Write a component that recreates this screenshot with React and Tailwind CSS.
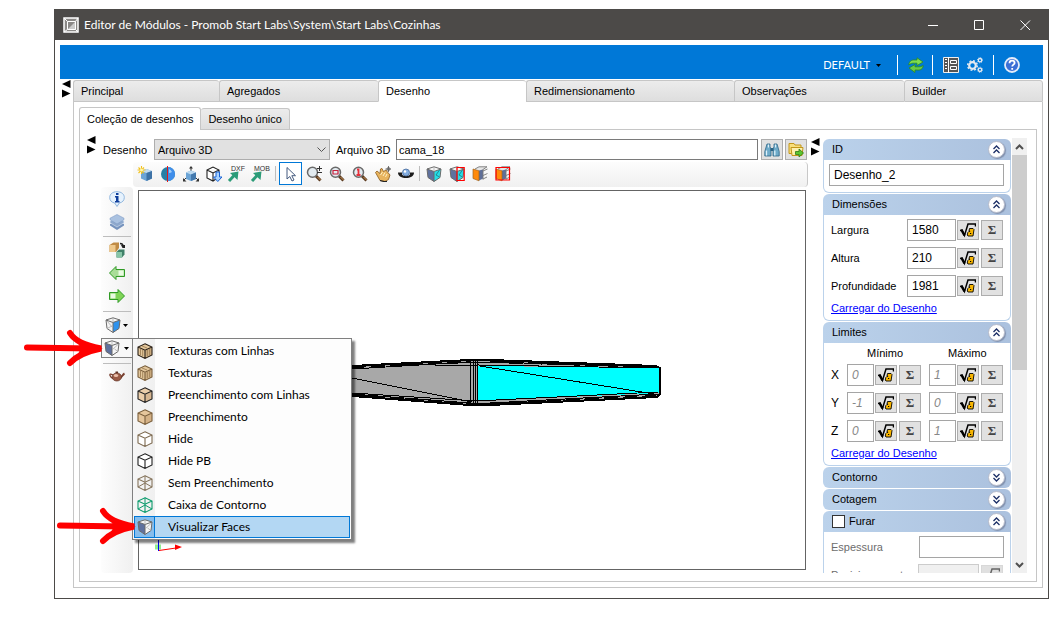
import { useState } from 'react';

const TABS = ['Principal', 'Agregados', 'Desenho', 'Redimensionamento', 'Observações', 'Builder'];

const MENU = [
  { label: 'Texturas com Linhas', icon: { fill: '#e3c79c', line: '#2b2118', grain: true } },
  { label: 'Texturas', icon: { fill: '#e3c79c', line: '#7a5f3c', grain: true } },
  { label: 'Preenchimento com Linhas', icon: { fill: '#ecceaa', line: '#222222' } },
  { label: 'Preenchimento', icon: { fill: '#e6c69c', line: '#7a5f3c' } },
  { label: 'Hide', icon: { fill: '#ffffff', line: '#7d6a50' } },
  { label: 'Hide PB', icon: { fill: '#ffffff', line: '#222222' } },
  { label: 'Sem Preenchimento', icon: { fill: 'none', line: '#85745c', hidden: true } },
  { label: 'Caixa de Contorno', icon: { fill: 'none', line: '#0b9b6c', hidden: true } },
  { label: 'Visualizar Faces', faces: true },
];

const inputBase = 'border border-[#a5a5a5] bg-white outline-none';

function Icon({ children }) {
  return (
    <svg width="16" height="16" viewBox="0 0 16 16" fill="none" className="shrink-0" aria-hidden="true">
      {children}
    </svg>
  );
}

function CubeIcon({ fill, line, grain, hidden }) {
  return (
    <Icon>
      <path d="M8 .8 15 4v8l-7 3.400L1 12V4Z" fill={fill} />
      {fill !== 'none' && fill !== '#ffffff' && <path d="M8 7.200 15 4v8l-7 3.400Z" fill="#8a6130" fillOpacity=".2" />}
      {grain && <path d="M3.500 6v6M5.700 7v6M10.300 7v6M12.700 6v6M5 3l5 2" stroke="#8a6a40" strokeWidth=".7" />}
      <path d="M8 .8 15 4v8l-7 3.400L1 12V4ZM1 4l7 3.200L15 4M8 7.200v8.200" stroke={line} strokeWidth="1.100" />
      {hidden && <path d="M8 .8v6.400M1 12l7-4 7 4" stroke={line} strokeWidth="1" />}
    </Icon>
  );
}

function FacesIcon({ left = '#5f719e', right, mark }) {
  return (
    <Icon>
      <path d="M1 3 8 .8 15 3l-1 8.500-6 4-6-4Z" fill="#f6f6f6" />
      <path d="M1 3 8 5.500v10l-6-4Z" fill={left} />
      {right && <path d="M8 5.500 15 3l-1 8.500-6 4Z" fill={right} />}
      <path d="M1 3 8 .8 15 3l-1 8.500-6 4-6-4ZM1 3l7 2.500L15 3M8 5.500v10" stroke="#6b6b6b" />
      <path d="M8 .8v4.700" stroke="#aaa" strokeWidth=".7" />
      {right === '#23dfe8' && <path d="m13.500 4-3.500 5 3.500 2" stroke="#24717f" strokeWidth=".8" />}
      {!right && <path d="m8 10 6-5.500M10.500 9l3.500 2.500" stroke="#aaa" strokeWidth=".8" />}
      {left === '#f4f4f4' && <path d="m2 11.500 6-3M2 4l6 7" stroke="#aaa" strokeWidth=".8" />}
      {mark && <path d="M8 1.500h7.200v13H8Z" stroke="#f00" strokeWidth="1.200" />}
    </Icon>
  );
}

function OrangeFacesIcon({ mark }) {
  return (
    <Icon>
      <path d="M3 3 7 .8h8L11 3.500v10l-4 1V4.500Z" fill="#e6e6e6" />
      <path d="M7 4.500 11 3.500v9L7 14.500Z" fill="#5f6f98" />
      <path d="M3 3 7 .8h8L11 3.500v10M11 5l4.500-2M11 9.500l4.500-2M11 13l4-2" stroke="#777" strokeWidth=".9" />
      <path d="M1 3 7 4.800v10L1 12.500Z" fill="#ff8a0a" stroke="#9c6424" strokeWidth=".7" />
      {mark && <path d="M1 1.500h13.500v12.500H1Z" stroke="#f00" strokeWidth="1.200" />}
    </Icon>
  );
}

function ZoomIcon({ children }) {
  return (
    <Icon>
      <path d="m10 10 4.500 4.500" stroke="#5b3a1e" strokeWidth="3" />
      <path d="m11.500 11 3 3" stroke="#c8955c" strokeWidth="1" />
      <circle cx="6.500" cy="6.200" r="5" fill="#e3ebf0" stroke="#6a6a6a" strokeWidth="1.500" />
      {children}
    </Icon>
  );
}

function ExportIcon({ text }) {
  return (
    <svg width="21" height="18" viewBox="0 0 21 18" fill="none" className="shrink-0 overflow-visible" aria-hidden="true">
      <path d="m3 16 6-6.500" stroke="#2c9c78" strokeWidth="3" />
      <path d="m4 8 8.500-1.500L11.500 15Z" fill="#2c9c78" />
      <text x="5" y="6" fontSize="7" fill="#333" fontFamily="Liberation Sans, sans-serif">{text}</text>
    </svg>
  );
}

function NewIcon() {
  return (
    <Icon>
      <path d="m4 5 5.500-2L15 5v7.500L9.500 15 4 12.500Z" fill="#6ba4d6" />
      <path d="m4 5 5.500-2L15 5 9.500 7Z" fill="#c3dcf0" />
      <path d="M9.500 7 15 5v7.500L9.500 15Z" fill="#3d72a6" />
      <path d="M4.500 0v8M.5 4h8M1.500 1.500l5.500 5.500M7 1.500 1.500 7" stroke="#f2c21c" strokeWidth="1.100" />
      <circle cx="4.500" cy="4" r="1.500" fill="#fff7b0" />
    </Icon>
  );
}

function MirrorIcon() {
  return (
    <Icon>
      <circle cx="8" cy="8" r="7" fill="#277fa6" />
      <path d="M8 1a7 7 0 0 1 0 14Z" fill="#3f8eea" />
      <path d="M9 3a5 5 0 0 1 3 3 6 6 0 0 1-3 1Z" fill="#9dccfa" />
      <path d="M7.500 0v16" stroke="#e01818" />
    </Icon>
  );
}

function AxesIcon() {
  return (
    <Icon>
      <path d="M8 6V1M3 12l-2.500 2.500M13 12l2.500 2.500" stroke="#333" />
      <path d="m8 0 2 2.500H6ZM0 12v3.500h3.500ZM16 12v3.500h-3.500Z" fill="#333" />
      <path d="m3 6.500 5-2 5 2v6.500L8 15l-5-2Z" fill="#6ba4d6" />
      <path d="m3 6.500 5-2 5 2-5 2Z" fill="#bcd9ef" />
      <path d="m8 8.500 5-2v6.500L8 15Z" fill="#4379ad" />
    </Icon>
  );
}

function ImportCubeIcon() {
  return (
    <Icon>
      <path d="m1 4 6-3 6 3v7l-6 4-6-3Zm0 0 6 3 6-3M7 7v8" fill="#fff" stroke="#222" strokeWidth="1.100" />
      <path d="M10 6h3.500v5H16l-4.200 4.500L7.500 11H10Z" fill="#a9d3ff" stroke="#1863d6" />
    </Icon>
  );
}

function HandIcon() {
  return (
    <Icon>
      <path d="M.5 6.500 2 5l3 2.500L5.500 3l1.500-.5 1.500 3L11 4l1.500 2L15 9l-1.500 4.500-3.500 2-5-1Z" fill="#e8b45e" stroke="#8a5a1c" strokeWidth=".8" />
      <path d="m5.500 9 2-3M8 10l2-3.500M10.500 11l1.500-3" stroke="#fff0c4" />
      <path d="M13.500 0v6M10.500 3h5.500" stroke="#555" strokeWidth=".8" />
      <circle cx="13.500" cy="3" r="1.500" stroke="#555" strokeWidth=".8" />
      <path d="M5 14.500 9 15.500h3" stroke="#222" strokeWidth="1.200" />
    </Icon>
  );
}

function OrbitIcon() {
  return (
    <Icon>
      <path d="M0 6.500h4v2c2 2 6 2 8 0v-2h4c0 4-4 5.500-8 5.500s-8-1.500-8-5.500Z" fill="#1c1c1c" />
      <circle cx="8" cy="6.500" r="3.500" fill="#85aee0" stroke="#45699a" strokeWidth=".8" />
      <circle cx="7" cy="5.500" r="1.200" fill="#fff" />
    </Icon>
  );
}

function InfoIcon() {
  return (
    <Icon>
      <path d="M8 .7c4.500 0 7.300 2.500 7.300 5.800 0 3-2 5-5 5.500L8 15.500 5.700 12C2.700 11.500.7 9.500.7 6.500.7 3.200 3.500.7 8 .7Z" fill="#e6f2fd" stroke="#8fb6de" />
      <path d="M7 2h2.500v2H7ZM6 5h3.500v5h1v1.500H6V10h1V6.500H6Z" fill="#0f3f9c" />
    </Icon>
  );
}

function LayersIcon() {
  return (
    <Icon>
      <path d="m1 10 7-3 7 3v1.500L8 16l-7-4.500Z" fill="#7693bd" />
      <path d="m1 7.200 7-3 7 3v1.500L8 13 1 8.700Z" fill="#8fa9cd" stroke="#e6eef8" strokeWidth=".5" />
      <path d="M1 4.200 8 .5l7 3.700v1.500L8 10 1 5.700Z" fill="#a9c1e0" stroke="#7f9cc4" strokeWidth=".6" />
    </Icon>
  );
}

function SwapIcon() {
  return (
    <Icon>
      <path d="m.5 3 4-2.500h5.500V6l-3 4H.5Z" fill="#c08b45" />
      <path d="M.5 3H6.500v7H.5Z" fill="#efc98c" />
      <path d="m7.500 10 2.500-2.500h5.500v5l-2.500 3h-5.500Z" fill="#3f8068" />
      <path d="M7.500 10H13v5.500H7.500Z" fill="#86c4a6" />
      <path d="M11 1.500c2 0 3 .5 3 2.500" stroke="#222" strokeWidth="1.300" />
      <path d="M12 3h4v3h-2.500Z" fill="#222" />
    </Icon>
  );
}

function GreenArrow({ left }) {
  return (
    <Icon>
      <g transform={left ? 'matrix(-1 0 0 1 16 0)' : undefined}>
        <path d="M.5 4.500H9V1.500L15.500 8 9 14.500v-3H.5Z" fill={left ? '#a9dd98' : '#7fd457'} stroke="#2f9a24" />
        <path d="M1.500 5.500h5v5h-5Z" fill="#e9fae2" />
      </g>
    </Icon>
  );
}

function TeapotIcon() {
  return (
    <Icon>
      <path d="M4 7C1.500 5.500.5 6 1 7.500s1.500 2.500 3.500 3" stroke="#7a4030" strokeWidth="1.300" />
      <path d="M11 10c2-.5 2.500-3.500 4.500-4.500" stroke="#7a4030" strokeWidth="2" />
      <ellipse cx="7.800" cy="9" rx="4.700" ry="4" fill="#9a5a45" stroke="#5f3022" strokeWidth=".7" />
      <path d="M6.500 3.500h2.500v1.500H6.500Z" fill="#5f3022" />
      <ellipse cx="7" cy="7.500" rx="2.200" ry="1.600" fill="#ecc0aa" />
    </Icon>
  );
}

function RefreshIcon() {
  return (
    <Icon>
      <path d="M.8 8C1 4.500 3.500 2.500 7 3h2V.8L15 5 9 8.500V6.200H6.500C4 6 2.500 6.500.8 8Z" fill="#7fdc4e" stroke="#2b8a20" strokeWidth=".8" />
      <path d="M15.200 8.500c-.2 3.500-2.700 5-6.200 4.500H7v2.500L1 11l6-3.500v2.300h2.500c2.500.2 4-.3 5.700-1.300Z" fill="#6acb45" stroke="#2b8a20" strokeWidth=".8" />
    </Icon>
  );
}

function ListIcon() {
  return (
    <Icon>
      <path d="M.5.500h15v15H.5Z" fill="#555" stroke="#eee" />
      <path d="M5.500 0v16" stroke="#fff" />
      <path d="M2 2.500h2M2 5.500h2M2 8.500h2M2 11.500h2" stroke="#fff" />
      <path d="M7.500 3.500h6v3h-6ZM7.500 9.500h6v3h-6Z" stroke="#fff" />
    </Icon>
  );
}

function GearsIcon() {
  return (
    <Icon>
      <circle cx="5.500" cy="8.500" r="3.300" stroke="#e5eaf0" strokeWidth="2.200" />
      <circle cx="5.500" cy="8.500" r="4.800" stroke="#e5eaf0" strokeWidth="1.500" strokeDasharray="1.900 1.870" />
      <circle cx="13" cy="3.200" r="1.700" stroke="#e5eaf0" strokeWidth="1.300" />
      <circle cx="13" cy="3.200" r="2.600" stroke="#e5eaf0" strokeWidth=".8" strokeDasharray="1 1.040" />
      <circle cx="13" cy="12.800" r="1.700" stroke="#e5eaf0" strokeWidth="1.300" />
      <circle cx="13" cy="12.800" r="2.600" stroke="#e5eaf0" strokeWidth=".8" strokeDasharray="1 1.040" />
    </Icon>
  );
}

function HelpIcon() {
  return (
    <Icon>
      <circle cx="8" cy="8" r="7" fill="#3c6fd6" stroke="#e4ecfa" strokeWidth="1.800" />
      <path d="M5.500 6.200C5.500 4.500 6.600 3.700 8 3.700s2.600.8 2.600 2.200c0 1.600-2.400 1.900-2.400 3.600M8.200 11v1.700" stroke="#fff" strokeWidth="1.800" />
    </Icon>
  );
}

function BinocularsIcon() {
  return (
    <Icon>
      <path d="M3 2h3v3l1 1.500V14H.8V9.500ZM10 2h3l2.200 7.500V14H9V6.500L10 5Z" fill="#6fabc9" stroke="#2c6485" strokeWidth=".8" />
      <path d="M6.500 6h3v3h-3Z" fill="#2c6485" />
      <path d="M2.500 8.500v5M4.500 2.500v3M10.800 8.500v5M11.500 2.500v3" stroke="#dff1fa" strokeWidth="1.300" />
    </Icon>
  );
}

function FolderIcon() {
  return (
    <Icon>
      <path d="M1 1.500h5l1 1.500h6v8.500H1Z" fill="#f8df7c" stroke="#c3971a" />
      <path d="M3 5.500h12L14 13.500H4Z" fill="#fdf0ae" stroke="#c3971a" />
      <path d="M7.500 9.500H11V7l4.500 4-4.500 4v-2.500H7.500Z" fill="#5cc530" stroke="#2c7a14" strokeWidth=".8" />
    </Icon>
  );
}

function RootIcon() {
  return (
    <Icon>
      <path d="M0 8.500 2 8l2.500 5.500L8 2h7.500v2.500" stroke="#000" strokeWidth="1.500" />
      <path d="m1.500 8 3 5.500" stroke="#000" strokeWidth="2.400" />
      <path d="M9.500 6.500h3.500l1 1-1 6.500h-5l-.7-1 .5-2.500 1-1h1V9H9Z" fill="#f7b500" stroke="#000" strokeWidth=".9" />
      <path d="M10 11.500h1.200" stroke="#000" strokeWidth="1.100" />
    </Icon>
  );
}

function Splitter() {
  return (
    <svg width="9" height="18" viewBox="0 0 9 18" className="shrink-0" aria-hidden="true">
      <path d="M8.500 0v8L0 4ZM0 9.500v8L8.500 13.500Z" fill="#000" />
    </svg>
  );
}

function ToolButton({ label, active, children }) {
  return (
    <button
      aria-label={label}
      className={`flex h-[23px] w-[23px] shrink-0 items-center justify-center ${active ? 'border border-[#0078d7] bg-white' : ''}`}
    >
      {children}
    </button>
  );
}

function FormulaButtons() {
  return (
    <>
      <button aria-label="Fórmula" className="ml-px flex h-5 w-[22px] shrink-0 items-center justify-center border border-[#adadad] bg-[#e1e1e1]">
        <RootIcon />
      </button>
      <button aria-label="Somatório" className="ml-0.5 h-5 w-[22px] shrink-0 border border-[#adadad] bg-[#e1e1e1] font-['Liberation_Serif',serif] text-[13px] leading-[18px] font-bold text-[#444]">
        Σ
      </button>
    </>
  );
}

function Section({ title, closed, check, children }) {
  return (
    <section>
      <div className={`flex h-[21px] items-center bg-linear-to-r from-[#bbd2eb] to-[#abc1de] pr-[6px] pb-px pl-[9px] ${closed ? 'rounded-md' : 'rounded-t-md'}`}>
        {check ? (
          <label className="flex flex-1 items-center gap-1">
            <input type="checkbox" className="size-[13px] appearance-none border border-[#333] bg-white" />
            {title}
          </label>
        ) : (
          <h3 className="flex-1">{title}</h3>
        )}
        <button aria-label={title} className="flex size-[17px] items-center justify-center rounded-full border border-[#b7bccb] bg-white shadow-[1px_1px_1px_#8090ad]">
          <svg width="9" height="9" viewBox="0 0 9 9" fill="none" stroke="#1c2f66" strokeWidth="1.300" aria-hidden="true">
            <path d={closed ? 'm1.500 1 3 3 3-3m-6 4 3 3 3-3' : 'm1.500 4 3-3 3 3m-6 4 3-3 3 3'} />
          </svg>
        </button>
      </div>
      {!closed && <div className="rounded-b-md border border-t-0 border-[#bbd2eb] pt-1 pr-[6px] pb-1 pl-[5px]">{children}</div>}
    </section>
  );
}

function DimensionRow({ label, value }) {
  const id = `dim-${label}`;
  return (
    <div className="mb-1.5 flex items-center pr-px pl-0.5">
      <label htmlFor={id} className="flex-1">{label}</label>
      <input id={id} defaultValue={value} className={`h-[22px] w-[49px] px-1 text-[12px] ${inputBase}`} />
      <FormulaButtons />
    </div>
  );
}

function LimitRow({ axis, min, max }) {
  return (
    <div className="mb-1.5 flex items-center pr-px pl-0.5">
      <span className="flex-1 text-[12px]">{axis}</span>
      <input aria-label={`${axis} mínimo`} defaultValue={min} className={`h-[22px] w-[27px] px-1 text-[12px] text-[#888] italic ${inputBase}`} />
      <FormulaButtons />
      <input aria-label={`${axis} máximo`} defaultValue={max} className={`ml-2 h-[22px] w-[27px] px-1 text-[12px] text-[#888] italic ${inputBase}`} />
      <FormulaButtons />
    </div>
  );
}

function Properties() {
  return (
    <div className="flex h-[435px] w-[204px] shrink-0 overflow-hidden">
      <div className="flex flex-1 flex-col gap-px pt-px">
        <Section title="ID">
          <input aria-label="ID" defaultValue="Desenho_2" className={`mb-0.5 h-[22px] w-[175px] px-1 text-[12px] ${inputBase}`} />
        </Section>
        <Section title="Dimensões">
          <DimensionRow label="Largura" value="1580" />
          <DimensionRow label="Altura" value="210" />
          <DimensionRow label="Profundidade" value="1981" />
          <a href="#dimensoes" className="-mt-[3px] block h-4 pl-0.5 leading-4 text-[#0000ff] underline">Carregar do Desenho</a>
        </Section>
        <Section title="Limites">
          <div className="mb-0.5 flex h-[15px] leading-[13px]">
            <span className="ml-[38px] w-[81px]">Mínimo</span>
            <span>Máximo</span>
          </div>
          <LimitRow axis="X" min="0" max="1" />
          <LimitRow axis="Y" min="-1" max="0" />
          <LimitRow axis="Z" min="0" max="1" />
          <a href="#limites" className="-mt-[3px] block h-4 pl-0.5 leading-4 text-[#0000ff] underline">Carregar do Desenho</a>
        </Section>
        <Section title="Contorno" closed />
        <Section title="Cotagem" closed />
        <Section title="Furar" check>
          <div className="mb-1.5 flex items-center pl-0.5 text-[#6d6d6d]">
            <label htmlFor="espessura" className="flex-1">Espessura</label>
            <input id="espessura" className={`h-[22px] w-[85px] ${inputBase}`} />
          </div>
          <div className="flex items-center pr-px pl-0.5 text-[#6d6d6d]">
            <label htmlFor="posicionamento" className="flex-1">Posicionamento</label>
            <input id="posicionamento" disabled className="h-[22px] w-[61px] border border-[#ccc] bg-[#f0f0f0]" />
            <button disabled aria-label="Fórmula" className="ml-0.5 flex h-5 w-[22px] items-center justify-center border border-[#bfbfbf] bg-[#ccc] opacity-60 grayscale">
              <RootIcon />
            </button>
          </div>
        </Section>
      </div>
      <div className="ml-px flex w-[15px] flex-col items-center bg-[#f0f0f0]">
        <svg width="15" height="17" viewBox="0 0 15 17" fill="none" stroke="#505050" strokeWidth="2" className="shrink-0" aria-hidden="true">
          <path d="m4 11 3.500-3.500L11 11" />
        </svg>
        <div className="h-[215px] w-full shrink-0 bg-[#cdcdcd]" />
        <div className="flex-1" />
        <svg width="15" height="17" viewBox="0 0 15 17" fill="none" stroke="#505050" strokeWidth="2" className="shrink-0" aria-hidden="true">
          <path d="m4 7 3.500 3.500L11 7" />
        </svg>
      </div>
    </div>
  );
}

function Toolbar() {
  return (
    <div className="ml-[46px] flex h-[25px] items-center rounded border-r border-[#c8c8c8] bg-linear-to-b from-[#fdfdfd] to-[#f0f0f0] pb-0.5">
      <ToolButton label="Novo"><NewIcon /></ToolButton>
      <ToolButton label="Espelhar"><MirrorIcon /></ToolButton>
      <ToolButton label="Eixos"><AxesIcon /></ToolButton>
      <ToolButton label="Importar"><ImportCubeIcon /></ToolButton>
      <ToolButton label="Exportar DXF"><ExportIcon text="DXF" /></ToolButton>
      <ToolButton label="Exportar MOB"><ExportIcon text="MOB" /></ToolButton>
      <div className="mr-[3px] ml-1 h-[15px] w-px bg-[#bdbdbd]" />
      <ToolButton label="Selecionar" active>
        <Icon>
          <path d="M4 1.500v11.500l2.800-2.500L9 15l2-1-2.200-4.300H12.500Z" fill="#fff" stroke="#43597e" />
        </Icon>
      </ToolButton>
      <ToolButton label="Zoom dinâmico">
        <ZoomIcon><path d="M13.500 0v5M11 2.500h5M11 6.500h5" stroke="#333" /></ZoomIcon>
      </ToolButton>
      <ToolButton label="Zoom janela">
        <ZoomIcon><path d="M4 4.500h5V8H4Z" stroke="#c8203c" strokeWidth="1.200" /></ZoomIcon>
      </ToolButton>
      <ToolButton label="Zoom total">
        <ZoomIcon><path d="M5 3.500h1.500v5.500M4.500 9h4" stroke="#e8303a" strokeWidth="1.800" /></ZoomIcon>
      </ToolButton>
      <ToolButton label="Mover"><HandIcon /></ToolButton>
      <ToolButton label="Orbitar"><OrbitIcon /></ToolButton>
      <div className="mx-[2px] h-[15px] w-px bg-[#bdbdbd]" />
      <ToolButton label="Face direita"><FacesIcon right="#23dfe8" /></ToolButton>
      <ToolButton label="Marcar face direita"><FacesIcon right="#23dfe8" mark /></ToolButton>
      <ToolButton label="Face esquerda"><OrangeFacesIcon /></ToolButton>
      <ToolButton label="Marcar face esquerda"><OrangeFacesIcon mark /></ToolButton>
    </div>
  );
}

function ViewMenu({ selected, onSelect }) {
  return (
    <ul className="absolute top-0 left-[31px] z-10 w-[220px] border border-[#808080] bg-linear-to-r from-[#f6f6f6] from-0% via-[#f0f0f0] via-[10%] to-[#fdfdfd] to-[10%] p-px font-['Lato',sans-serif] text-[12px] shadow-[3px_3px_2px_#00000080]">
      {MENU.map((item) => (
        <li key={item.label}>
          <button
            onClick={() => onSelect(item.label)}
            className={`flex h-[22px] w-full items-center text-left ${selected === item.label ? 'border border-[#0078d7] bg-[#b3d7f3]' : 'border border-transparent'}`}
          >
            <span className={`flex h-full w-5 items-center justify-center ${selected === item.label ? 'border-r border-[#0078d7] bg-[#86bdec]' : ''}`}>
              {item.faces ? <FacesIcon /> : <CubeIcon {...item.icon} />}
            </span>
            <span className="ml-[13px]">{item.label}</span>
          </button>
        </li>
      ))}
    </ul>
  );
}

function SideBar() {
  const [selected, setSelected] = useState('Visualizar Faces');
  const caret = (
    <svg width="5" height="3" viewBox="0 0 5 3" aria-hidden="true"><path d="M0 0h5L2.500 3Z" /></svg>
  );
  return (
    <div className="flex w-[32px] shrink-0 flex-col items-center rounded bg-linear-to-r from-[#fdfdfd] to-[#f0f0f0]">
      <ToolButton label="Informações"><InfoIcon /></ToolButton>
      <ToolButton label="Camadas"><LayersIcon /></ToolButton>
      <div className="mt-[3px] mb-px h-px w-7 shrink-0 bg-[#bdbdbd]" />
      <ToolButton label="Trocar"><SwapIcon /></ToolButton>
      <ToolButton label="Anterior"><GreenArrow left /></ToolButton>
      <ToolButton label="Próximo"><GreenArrow /></ToolButton>
      <div className="mt-1 mb-px h-px w-7 shrink-0 bg-[#bdbdbd]" />
      <button aria-label="Vista" className="flex h-6 w-full items-center gap-0.5 pl-1">
        <FacesIcon left="#f4f4f4" right="#2f93ee" />
        {caret}
      </button>
      <div className="relative mt-px w-full">
        <button aria-label="Modo de visualização" className="flex h-5 w-[32px] items-center gap-1 border border-[#808080] bg-[#f8f8f8] pl-0.5">
          <FacesIcon />
          {caret}
        </button>
        <ViewMenu selected={selected} onSelect={setSelected} />
      </div>
      <div className="mt-[5px] h-px w-7 shrink-0 bg-[#bdbdbd]" />
      <ToolButton label="Renderizar"><TeapotIcon /></ToolButton>
    </div>
  );
}

function Viewport() {
  return (
    <div className="mt-[3px] mr-0.5 mb-[3px] ml-[5px] min-w-0 flex-1 overflow-hidden border border-[#646464] bg-white">
      <svg width="666" height="378" viewBox="139 191 666 378" fill="none" role="img" aria-label="cama_18">
        <g shapeRendering="crispEdges">
          <path d="M290 372 352 366 470 360 486 360 655 365 660 367V394l-4 3-170 8-16 1-118-10-62-6Z" fill="#a8a8a8" />
          <path d="M478 366 659 368V393L478 401Z" fill="#00ffff" />
          <path d="M290 371 352 366 470 360H490L656 366 660 368V394l-3 3-167 8H470L352 396l-62-6" stroke="#000" strokeWidth="2" />
          <path d="M352 369 470 362H490L658 367M352 394l118 9h20l168-9M400 364l70 2 8-1 180 3M352 393l124 8 182-9" stroke="#000" />
          <path d="M352 367l118-5M352 395l118 9M490 362l168 5M490 404l166-8" stroke="#000" strokeDasharray="14 5" strokeWidth="2" />
          <path d="M470.500 360v46M473.500 360v46M475.500 360v46M477.500 361v44M352 378l120 24M480 366l174 28" stroke="#000" />
        </g>
        <path d="M155 547h6" stroke="#90ee90" strokeWidth="5" />
        <path d="M158.500 536v15" stroke="#00f" />
        <path d="m159 550.500 17-2.500" stroke="#f00" />
        <path d="m175 544.500 7 2.500-7 3Z" fill="#f00" />
      </svg>
    </div>
  );
}

function PointerArrow({ className }) {
  return (
    <svg width="82" height="38" viewBox="0 0 82 38" fill="none" stroke="#f00" strokeLinecap="round" strokeLinejoin="round" className={`pointer-events-none absolute z-20 ${className}`} aria-hidden="true">
      <path d="M4 18.500 68 19.500" strokeWidth="6" />
      <path d="M47 4c5 8 14 12 31 15.500-15 3-24 7-31 14.500" strokeWidth="6" strokeLinejoin="miter" />
      <path d="M50 5c8 7 16 12 30 14.500C68 22 58 26 50 34l8-14.500Z" fill="#f00" stroke="none" />
    </svg>
  );
}

export default function App() {
  const [tab, setTab] = useState('Desenho');

  return (
    <div className="relative min-h-screen bg-white pt-[9px] pr-[14px] pb-[38px] pl-[54px] font-['Liberation_Sans',sans-serif] text-[11px] leading-4 text-black">
      <main className="border border-[#4c4a48]">
        <header className="flex h-[30px] items-center bg-[#4c4a48] pl-2 font-['Lato',sans-serif] text-[12px] text-white">
          <Icon>
            <path d="M1 1h14v14H1Z" fill="#8a8886" stroke="#fff" strokeWidth="1.500" />
            <path d="M4.500 4.500h8v8h-8ZM1 1l3.500 3.500M15 1l-2.500 3.500M1 15l3.500-2.500M15 15l-2.500-2.500" stroke="#fff" />
            <path d="M5 12 12 5v7Z" fill="#ccc" />
          </Icon>
          <h1 className="ml-[5px] flex-1">Editor de Módulos - Promob Start Labs\System\Start Labs\Cozinhas</h1>
          {[
            ['Minimizar', 'M0 5.500h10'],
            ['Maximizar', 'M.5.500h9v9h-9Z'],
            ['Fechar', 'm.5.500 9.500 9.500M10 .5.500 10'],
          ].map(([label, d]) => (
            <button key={label} aria-label={label} className="flex h-full w-[46px] items-center justify-center">
              <svg width="11" height="11" viewBox="0 0 11 11" fill="none" stroke="#fff" aria-hidden="true"><path d={d} /></svg>
            </button>
          ))}
        </header>

        <div className="px-[5px] pt-[5px] pb-[10px]">
          <div className="flex h-[34px] items-center justify-end bg-[#0078d7] pt-1.5 pr-[23px] text-white">
            <button className="flex items-center gap-1.5 font-['Lato',sans-serif] text-[11px]">
              DEFAULT
              <svg width="5" height="3" viewBox="0 0 5 3" aria-hidden="true"><path d="M0 0h5L2.500 3Z" /></svg>
            </button>
            <span className="ml-4 h-5 w-px bg-white" />
            <button aria-label="Atualizar" className="ml-2.5"><RefreshIcon /></button>
            <span className="ml-2 h-5 w-px bg-white" />
            <button aria-label="Lista" className="ml-2.5"><ListIcon /></button>
            <button aria-label="Configurações" className="ml-2"><GearsIcon /></button>
            <span className="ml-2.5 h-5 w-px bg-white" />
            <button aria-label="Ajuda" className="ml-2.5"><HelpIcon /></button>
          </div>

          <div className="flex pl-[2px]">
            <div className="w-[11px] shrink-0 pt-px"><Splitter /></div>
            <div className="min-w-0 flex-1">
              <nav className="mt-px grid grid-cols-[146fr_159fr_148fr_208fr_170fr_139fr]">
                {TABS.map((t) => (
                  <button
                    key={t}
                    onClick={() => setTab(t)}
                    className={`h-[22px] rounded-t-[3px] border border-r-0 border-[#c6c6c6] pl-[7px] text-left last:border-r ${t === tab ? 'border-b-white bg-white' : 'bg-linear-to-b from-[#ececec] to-[#dedede]'}`}
                  >
                    {t}
                  </button>
                ))}
              </nav>

              <div className="border border-t-0 border-[#c6c6c6] px-[5px] pt-[5px] pb-[5px]">
                <div className="flex items-end">
                  <button className="relative -mb-px h-[23px] rounded-t-[3px] border border-b-0 border-[#c6c6c6] bg-white px-[7px]">Coleção de desenhos</button>
                  <button className="h-[21px] rounded-t-[3px] border border-b-0 border-l-0 border-[#c6c6c6] bg-linear-to-b from-[#ececec] to-[#dedede] px-[7px]">Desenho único</button>
                </div>
                <div className="flex border border-[#c6c6c6] pt-2 pr-[9px] pb-2 pl-[7px]">
                  <div className="min-w-0 flex-1">
                    <div className="flex h-6 items-start">
                      <div className="-mt-0.5"><Splitter /></div>
                      <label htmlFor="tipo" className="ml-[7px] w-[51px] pt-1">Desenho</label>
                      <div className="relative mt-px">
                        <select id="tipo" className="h-[21px] w-[176px] appearance-none border border-[#adadad] bg-[#e1e1e1] pl-[3px] outline-none">
                          <option>Arquivo 3D</option>
                        </select>
                        <svg width="9" height="6" viewBox="0 0 9 6" fill="none" stroke="#555" className="pointer-events-none absolute top-[8px] right-[4px]" aria-hidden="true">
                          <path d="m.5.500 4 4 4-4" />
                        </svg>
                      </div>
                      <label htmlFor="arquivo" className="ml-1.5 w-[60px] shrink-0 pt-1">Arquivo 3D</label>
                      <input id="arquivo" defaultValue="cama_18" className="mt-px h-[21px] min-w-0 flex-1 border border-[#7a7a7a] px-0.5 outline-none" />
                      <button aria-label="Procurar" className="mt-px ml-[3px] flex h-[21px] w-[22px] shrink-0 items-center justify-center border border-[#adadad] bg-[#e1e1e1]"><BinocularsIcon /></button>
                      <button aria-label="Abrir" className="mt-px mr-px ml-0.5 flex h-[21px] w-[22px] shrink-0 items-center justify-center border border-[#adadad] bg-[#e1e1e1]"><FolderIcon /></button>
                    </div>
                    <Toolbar />
                    <div className="flex h-[386px] pl-[14px]">
                      <SideBar />
                      <Viewport />
                    </div>
                  </div>
                  <div className="mr-[3px] ml-[3px]"><Splitter /></div>
                  <Properties />
                </div>
              </div>
            </div>
          </div>
        </div>
      </main>

      <PointerArrow className="top-[329px] left-[23px]" />
      <PointerArrow className="top-[507px] left-[56px]" />
    </div>
  );
}
